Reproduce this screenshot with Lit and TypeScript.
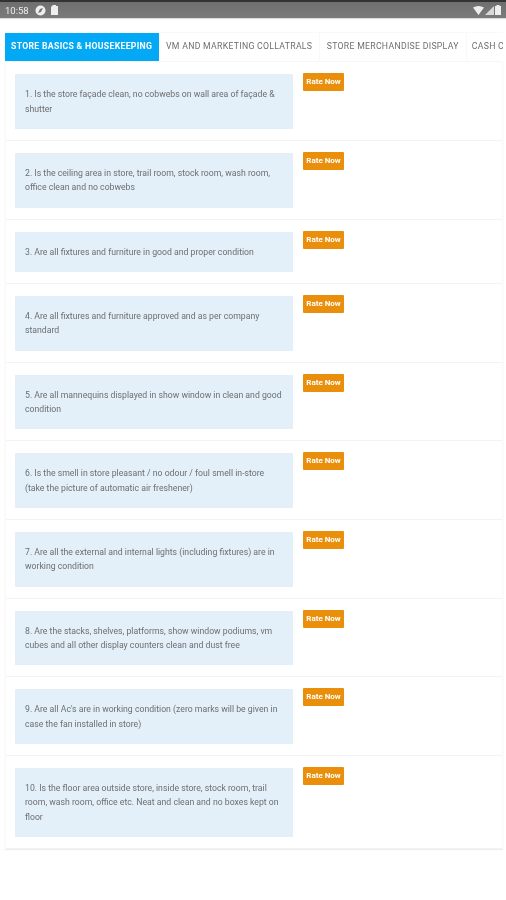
import { LitElement, html, css } from "lit";
import { customElement } from "lit/decorators.js";

const QUESTIONS = [
  "1. Is the store façade clean, no cobwebs on wall area of façade & shutter",
  "2. Is the ceiling area in store, trail room, stock room, wash room, office clean and no cobwebs",
  "3. Are all fixtures and furniture in good and proper condition",
  "4. Are all fixtures and furniture approved and as per company standard",
  "5. Are all mannequins displayed in show window in clean and good condition",
  "6. Is the smell in store pleasant / no odour / foul smell in-store (take the picture of automatic air freshener)",
  "7. Are all the external and internal lights (including fixtures) are in working condition",
  "8. Are the stacks, shelves, platforms, show window podiums, vm cubes and all other display counters clean and dust free",
  "9. Are all Ac's are in working condition (zero marks will be given in case the fan installed in store)",
  "10. Is the floor area outside store, inside store, stock room, trail room, wash room, office etc. Neat and clean and no boxes kept on floor",
];

@customElement("app-root")
export class AppRoot extends LitElement {
  static styles = css`
    :host { display: block; width: 506px; height: 900px; overflow: hidden; background: #fff; font-family: Roboto, "Liberation Sans", sans-serif; filter: blur(0.45px); }
    .status { height: 16px; border-top: 2px solid #333; background: linear-gradient(#6f6f6f, #7b7b7b); display: flex; align-items: center; padding: 0 5px; color: #eeeeee; font-size: 9.5px; box-shadow: 0 1px 1px #ddd; }
    .status .time { margin-right: 6px; }
    .status svg { display: block; margin-right: 5px; }
    .status .right { margin-left: auto; display: flex; align-items: center; gap: 1px; }
    .status .right svg { margin: 0; }
    .tabs { display: flex; margin: 14px 3px 0 5px; height: 30px; overflow: hidden; border-top: 1px solid #f9f9f9; border-bottom: 1px solid #f7f7f7; box-sizing: border-box; }
    .tab { flex: none; margin-top: -1px; height: 30px; line-height: 29px; font-size: 8.7px; letter-spacing: .3px; color: #6e6e6e; padding: 0 6.4px 0 7px; white-space: nowrap; border-right: 1px solid #f8f8f8; box-sizing: border-box; }
    .tab.active { background: #03a9f4; color: #fff; font-weight: 700; border: 0; border-radius: 1px; width: 154px; padding: 0 0 0 6px; }
    .tab.wide { padding-right: 7px; }
    .tab.last { padding-left: 5px; }
    .list { margin: 0 3px 0 5px; border: 1px solid #f9f9f9; border-width: 0 1px; box-shadow: 0 1px 1px #eee; }
    .row { display: flex; align-items: flex-start; padding: 12px 0 11px 9px; border-bottom: 1px solid #f3f3f3; }
    .row:first-child { padding-top: 12.2px; }
    .q { width: 278px; box-sizing: border-box; background: #e3f0fa; padding: 13px 10px; font-size: 8.7px; line-height: 14.35px; color: #6e6e6e; }
    .btn { margin: -1px 0 0 10px; width: 41px; height: 18px; line-height: 18px; text-align: center; background: #e98f0c; color: #fff; font-size: 8px; font-weight: 700; border-radius: 1px; }
  `;

  render() {
    return html`
      <div class="status">
        <span class="time">10:58</span>
        <svg width="11" height="11" viewBox="0 0 11 11"><circle cx="5.5" cy="5.5" r="5" fill="#eee"/><path d="M3 8l2-4 3-1-2 4z" fill="#757575"/></svg>
        <svg width="7" height="10" viewBox="0 0 7 10"><path d="M2 0h3v1h2v9H0V2z" fill="#eee"/></svg>
        <div class="right">
          <svg width="11" height="9" viewBox="0 0 11 9"><path d="M0 1.5Q5.5-1.5 11 1.5L5.5 9z" fill="#eee"/></svg>
          <svg width="9" height="9" viewBox="0 0 9 9"><path d="M9 0v9H0z" fill="#d8d8d8"/></svg>
          <svg width="6" height="10" viewBox="0 0 6 10"><path d="M1.5 0h3v1H6v9H0V1h1.5z" fill="#eee"/></svg>
        </div>
      </div>
      <div class="tabs">
        <div class="tab active">STORE BASICS &amp; HOUSEKEEPING</div>
        <div class="tab">VM AND MARKETING COLLATRALS</div>
        <div class="tab wide">STORE MERCHANDISE DISPLAY</div>
        <div class="tab last">CASH COUNTER</div>
      </div>
      <div class="list">
        ${QUESTIONS.map((q) => html`<div class="row"><div class="q">${q}</div><div class="btn">Rate Now</div></div>`)}
      </div>
    `;
  }
}
